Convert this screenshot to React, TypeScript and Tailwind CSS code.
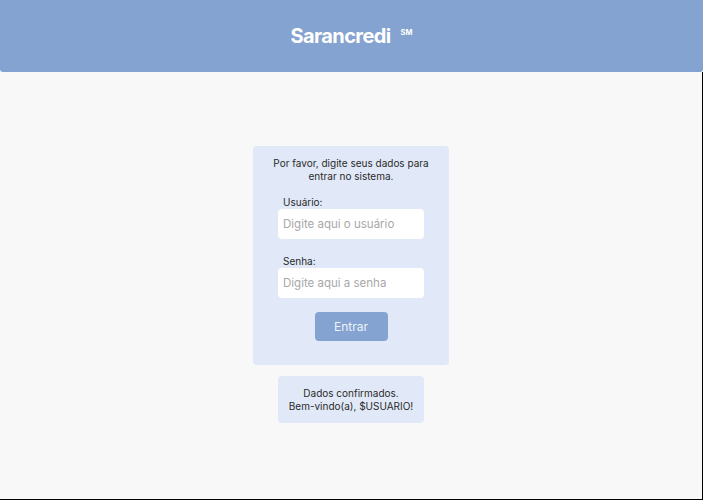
export default function App() {
  return (
    <div className="w-[703px] h-[500px] bg-[#f8f8f8] flex flex-col font-['Inter',sans-serif]">
      <header className="h-[72px] bg-[#85a3d0] rounded-b-[3px] flex items-center justify-center shrink-0">
        <h1 className="text-white text-[20px] font-bold tracking-[-0.6px] leading-none">
          Sarancredi
          <span className="ml-[10px] text-[7.5px] font-bold tracking-normal relative top-[-8px]">SM</span>
        </h1>
      </header>
      <main className="flex-1 border-r border-b border-black flex flex-col items-center pt-[74px]">
        <div className="w-[196px] h-[219px] bg-[#e1e9f8] rounded-[4px] flex flex-col items-center pt-[11px]">
          <p className="text-[10px] leading-[13px] text-[#2a2a2a] text-center">
            Por favor, digite seus dados para
            <br />
            entrar no sistema.
          </p>
          <div className="w-[146px] mt-[13px] flex flex-col">
            <label className="text-[10px] text-[#2a2a2a] pl-[5px] leading-[13px]">Usuário:</label>
            <input
              className="h-[30px] bg-white rounded-[4px] px-[5px] text-[11.5px] outline-none placeholder:text-[#a8a8a8]"
              placeholder="Digite aqui o usuário"
            />
            <label className="mt-[16px] text-[10px] text-[#2a2a2a] pl-[5px] leading-[13px]">Senha:</label>
            <input
              type="password"
              className="h-[30px] bg-white rounded-[4px] px-[5px] text-[11.5px] outline-none placeholder:text-[#a8a8a8]"
              placeholder="Digite aqui a senha"
            />
          </div>
          <button className="mt-[14px] w-[73px] h-[29px] bg-[#85a3d0] rounded-[4px] text-[12px] text-[#eef2fa]">
            Entrar
          </button>
        </div>
        <div className="mt-[11px] w-[146px] h-[47px] bg-[#e1e9f8] rounded-[4px] flex items-center justify-center">
          <p className="text-[10px] leading-[13px] text-[#2a2a2a] text-center">
            Dados confirmados.
            <br />
            Bem-vindo(a), $USUARIO!
          </p>
        </div>
      </main>
    </div>
  );
}
